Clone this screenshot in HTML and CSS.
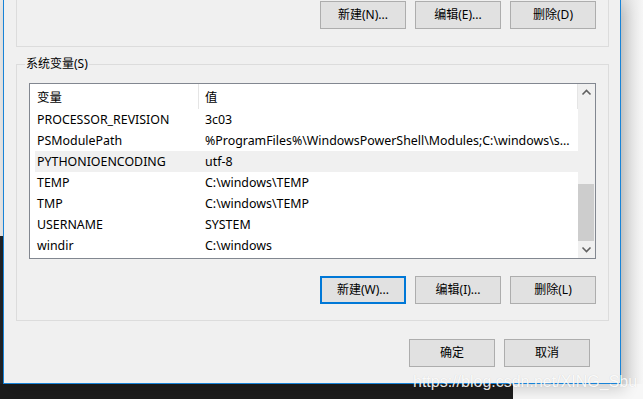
FILE: index.html
```html
<!DOCTYPE html>
<html lang="zh-CN">
<head>
<meta charset="utf-8">
<title>环境变量</title>
<link rel="stylesheet" href="styles.css">
</head>
<body>
<div class="screen">
  <div class="win">
    <div class="group group-user">
      <div class="btnrow">
        <button class="btn">新建(N)...</button>
        <button class="btn">编辑(E)...</button>
        <button class="btn">删除(D)</button>
      </div>
    </div>
    <div class="group group-sys">
      <div class="legend">系统变量(S)</div>
      <div class="list">
        <div class="list-main">
          <div class="hdr">
            <div class="hc1">变量</div>
            <div class="hc2">值</div>
          </div>
          <div class="row"><div class="c1">PROCESSOR_REVISION</div><div class="c2">3c03</div></div>
          <div class="row"><div class="c1">PSModulePath</div><div class="c2">%ProgramFiles%\WindowsPowerShell\Modules;C:\windows\s...</div></div>
          <div class="row sel"><div class="c1">PYTHONIOENCODING</div><div class="c2">utf-8</div></div>
          <div class="row"><div class="c1">TEMP</div><div class="c2">C:\windows\TEMP</div></div>
          <div class="row"><div class="c1">TMP</div><div class="c2">C:\windows\TEMP</div></div>
          <div class="row"><div class="c1">USERNAME</div><div class="c2">SYSTEM</div></div>
          <div class="row"><div class="c1">windir</div><div class="c2">C:\windows</div></div>
        </div>
        <div class="scroll">
          <div class="arrow">
            <svg width="17" height="17" viewBox="0 0 17 17"><path d="M4.5 10.5 L8.5 6.5 L12.5 10.5" fill="none" stroke="#606060" stroke-width="1.6"/></svg>
          </div>
          <div class="track"><div class="thumb"></div></div>
          <div class="arrow">
            <svg width="17" height="17" viewBox="0 0 17 17"><path d="M4.5 6.5 L8.5 10.5 L12.5 6.5" fill="none" stroke="#606060" stroke-width="1.6"/></svg>
          </div>
        </div>
      </div>
      <div class="btnrow">
        <button class="btn focus">新建(W)...</button>
        <button class="btn">编辑(I)...</button>
        <button class="btn">删除(L)</button>
      </div>
    </div>
    <div class="btnrow dlg">
      <button class="btn">确定</button>
      <button class="btn">取消</button>
    </div>
  </div>
  <div class="wm">https://blog.csdn.net/XING_Sbu</div>
</div>
</body>
</html>
```
FILE: styles.css
```css
* { box-sizing: border-box; }
html, body { margin: 0; padding: 0; }
body {
  font-family: "Noto Sans", "Noto Sans CJK SC", sans-serif;
  font-size: 12px;
  color: #000;
  background: #fff;
}
.screen {
  position: relative;
  width: 643px;
  height: 399px;
  overflow: hidden;
  background:
    linear-gradient(#1c1c1c, #1c1c1c) 0 384px / 513px 15px no-repeat,
    linear-gradient(#1f2328, #1f2328) 0 236px / 3px 163px no-repeat,
    linear-gradient(#e9e9e9, #e9e9e9) 0 0 / 3px 236px no-repeat,
    linear-gradient(to right, #dcdcdc, #f6f6f6) 621px 0 / 22px 384px no-repeat,
    #f7f7f7;
}
.win {
  margin-left: 3px;
  width: 618px;
  background: #f0f0f0;
  border: 1px solid #1883d7;
  border-top: none;
  padding: 0 11px 16px 12px;
  box-shadow: 4px 6px 14px rgba(0, 0, 0, 0.16);
}
.group {
  border: 1px solid #dcdcdc;
}
.group-user {
  border-top: none;
  padding: 1px 12px 17px 0;
}
.group-sys {
  margin-top: 17px;
  padding: 0 12px 16px 12px;
  display: flex;
  flex-direction: column;
}
.legend {
  align-self: flex-start;
  margin: -9px 0 0 -4px;
  padding: 0 1px;
  height: 16px;
  line-height: 16px;
  background: #f0f0f0;
}
.btnrow {
  display: flex;
  justify-content: flex-end;
  gap: 9px;
}
.group-sys .btnrow { margin-top: 17px; }
.btn {
  width: 86px;
  height: 28px;
  margin: 0;
  padding: 0;
  background: #e1e1e1;
  border: 1px solid #adadad;
  font-family: "Noto Sans", "Noto Sans CJK SC", sans-serif;
  font-size: 12px;
  color: #000;
  line-height: 1;
}
.btn.focus { border: 2px solid #0078d7; }
.dlg { margin-top: 18px; padding-right: 19px; }

.list {
  margin-top: 11px;
  height: 176px;
  border: 1px solid #828790;
  background: #fff;
  display: flex;
  font-size: 12.4px;
}
.list-main {
  flex: 1;
  min-width: 0;
  display: flex;
  flex-direction: column;
}
.hdr {
  display: flex;
  height: 25px;
  align-items: stretch;
}
.hc1 {
  width: 169px;
  padding-left: 7px;
  border-right: 1px solid #e5e5e5;
  display: flex;
  align-items: center;
}
.hc2 {
  flex: 1;
  padding-left: 6px;
  border-right: 1px solid #e5e5e5;
  display: flex;
  align-items: center;
}
.row {
  display: flex;
  height: 21px;
  margin-left: 5px;
  align-items: center;
  white-space: nowrap;
}
.row.sel { background: #f0f0f0; }
.c1 { width: 163px; padding-left: 2px; }
.c2 { flex: 1; min-width: 0; padding-left: 7px; overflow: hidden; }

.scroll {
  width: 17px;
  background: #f0f0f0;
  display: flex;
  flex-direction: column;
}
.arrow { height: 17px; }
.arrow svg { display: block; }
.track {
  flex: 1;
  display: flex;
  flex-direction: column;
  justify-content: flex-end;
}
.thumb {
  height: 57px;
  margin-right: 1px;
  background: #cdcdcd;
}
.wm {
  position: absolute;
  left: 413px;
  top: 372px;
  font-family: "Liberation Sans", sans-serif;
  font-size: 16px;
  line-height: 20px;
  color: rgba(255, 255, 255, 0.9);
  text-shadow: 0 0 1px rgba(0, 0, 0, 0.15);
  white-space: nowrap;
}
```
